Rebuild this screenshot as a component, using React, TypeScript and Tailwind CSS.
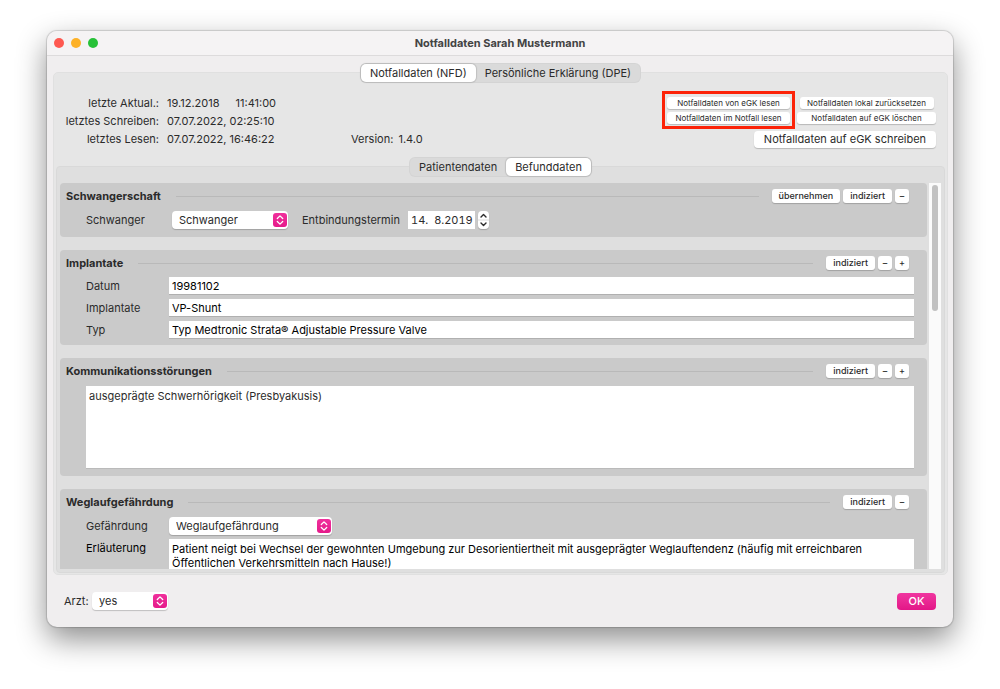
import type { ReactNode } from 'react';
import { clsx } from 'clsx';

const readTimes = [
  { label: 'letzte Aktual.:', value: '19.12.2018', time: '11:41:00' },
  { label: 'letztes Schreiben:', value: '07.07.2022, 02:25:10' },
  { label: 'letztes Lesen:', value: '07.07.2022, 16:46:22' },
];

const implantFields = [
  { id: 'datum', label: 'Datum', value: '19981102' },
  { id: 'implantate', label: 'Implantate', value: 'VP-Shunt' },
  { id: 'typ', label: 'Typ', value: 'Typ Medtronic Strata® Adjustable Pressure Valve' },
];

function Tabs({ items, active }: { items: string[]; active: string }) {
  return (
    <div role="tablist" className="flex h-[18px] rounded-[5px] bg-[#dadada] ring-1 ring-[#d4d4d4]">
      {items.map((item) => (
        <button
          key={item}
          role="tab"
          aria-selected={item === active}
          className={clsx(
            'rounded-[5px] px-[9px] text-[11px] leading-[18px]',
            item === active && 'bg-white shadow-[0_0_1px_1px_rgba(0,0,0,0.12)]'
          )}
        >
          {item}
        </button>
      ))}
    </div>
  );
}

function PushButton({ children, className }: { children: ReactNode; className?: string }) {
  return (
    <button
      className={clsx(
        'flex shrink-0 items-center justify-center whitespace-nowrap bg-white shadow-[0_1px_1px_rgba(0,0,0,0.2)]',
        className
      )}
    >
      {children}
    </button>
  );
}

function Select({ id, value, className }: { id: string; value: string; className: string }) {
  return (
    <div className={clsx('relative h-[18px]', className)}>
      <select
        id={id}
        defaultValue={value}
        className="h-full w-full appearance-none rounded-[4px] bg-white pl-[7px] pr-5 text-[11px] leading-[17px] shadow-[0_1px_1px_rgba(0,0,0,0.2)]"
      >
        <option>{value}</option>
      </select>
      <span className="pointer-events-none absolute right-px top-[2px] flex h-[14px] w-[14px] items-center justify-center rounded-[3px] bg-gradient-to-b from-[#f02f9c] to-[#e51a8a]">
        <svg viewBox="0 0 14 14" className="h-full w-full" fill="none" stroke="white" strokeWidth="1.3" strokeLinecap="round" strokeLinejoin="round">
          <path d="M4.3 5.5 7 2.9l2.7 2.6M4.3 8.5 7 11.1l2.7-2.6" />
        </svg>
      </span>
    </div>
  );
}

interface SectionProps {
  title: string;
  actions: string[];
  className?: string;
  children: ReactNode;
}

function Section({ title, actions, className, children }: SectionProps) {
  return (
    <section className={clsx('shrink-0 rounded-[4px] bg-[#cacaca] pl-[6px] pr-[13px] pt-[6px]', className)}>
      <div className="flex h-[14px] items-center pr-[5px]">
        <h2 className="text-[11px] font-bold leading-[14px]">{title}</h2>
        <div className="ml-[15px] mr-[13px] h-px flex-1 bg-[#b9b9b9]" />
        <div className="flex gap-[3px]">
          {actions.map((action) => (
            <PushButton
              key={action}
              className={clsx('h-[14px] rounded-[3px] text-[9px] font-medium', action.length > 1 ? 'px-[7px]' : 'w-[14px]')}
            >
              {action}
            </PushButton>
          ))}
        </div>
      </div>
      {children}
    </section>
  );
}

function FieldLabel({ htmlFor, children }: { htmlFor: string; children: ReactNode }) {
  return (
    <label htmlFor={htmlFor} className="w-[83px] shrink-0 leading-[18px]">
      {children}
    </label>
  );
}

export default function App() {
  return (
    <main className="flex h-screen flex-col overflow-hidden bg-white px-[47px] pb-[62px] pt-[31px] font-['Inter','Liberation_Sans',sans-serif] text-[11px] text-[#2b2b2b]">
      <div className="flex min-h-0 flex-1 flex-col overflow-hidden rounded-[10px] bg-[#f0eeef] shadow-[0_0_1px_1px_rgba(0,0,0,0.15),0_12px_30px_rgba(0,0,0,0.45)]">
        <header className="flex h-[25px] shrink-0 items-center border-b border-[#dddbdc] bg-[#f5f3f4] px-[7px]">
          <div className="flex flex-1 gap-[7px]">
            <span className="h-[10px] w-[10px] rounded-full bg-[#fe5850]" />
            <span className="h-[10px] w-[10px] rounded-full bg-[#fdb127]" />
            <span className="h-[10px] w-[10px] rounded-full bg-[#27c138]" />
          </div>
          <h1 className="text-[11px] font-bold text-[#434343]">Notfalldaten Sarah Mustermann</h1>
          <div className="flex-1" />
        </header>

        <div className="ml-[6px] mr-[5px] mt-4 flex min-h-0 flex-1 flex-col rounded-[5px] border border-[#e0e0e0] bg-[#e6e6e6] px-[2px] pb-px">
          <div className="-mt-[9px] flex shrink-0 justify-center">
            <Tabs items={['Notfalldaten (NFD)', 'Persönliche Erklärung (DPE)']} active="Notfalldaten (NFD)" />
          </div>

          <div className="mt-[9px] flex shrink-0 items-start pr-[9px]">
            <dl className="mt-[3px] w-[295px]">
              {readTimes.map((row) => (
                <div key={row.label} className="flex h-[18px] items-center">
                  <dt className="w-[103px] text-right">{row.label}</dt>
                  <dd className="ml-[8px] flex gap-4">
                    <span>{row.value}</span>
                    {row.time && <span>{row.time}</span>}
                  </dd>
                </div>
              ))}
            </dl>
            <p className="mt-[39px] leading-[18px]">
              Version: <span className="ml-[2px]">1.4.0</span>
            </p>

            <div className="ml-auto flex flex-col items-end gap-[2px]">
              <div className="flex items-center gap-[2px] text-[8px]">
                <div className="flex flex-col gap-[3px] border-[3px] border-[#fc2308] p-[2px] pt-[3px]">
                  <PushButton className="h-[12px] w-[123px] rounded-[3px]">Notfalldaten von eGK lesen</PushButton>
                  <PushButton className="h-[12px] w-[123px] rounded-[3px]">Notfalldaten im Notfall lesen</PushButton>
                </div>
                <div className="flex flex-col items-center gap-[3px]">
                  <PushButton className="h-[12px] w-[134px] rounded-[3px]">Notfalldaten lokal zurücksetzen</PushButton>
                  <PushButton className="h-[12px] w-[139px] rounded-[3px]">Notfalldaten auf eGK löschen</PushButton>
                </div>
              </div>
              <PushButton className="h-[17px] w-[182px] rounded-[4px]">Notfalldaten auf eGK schreiben</PushButton>
            </div>
          </div>

          <div className="mt-[18px] flex min-h-0 flex-1 flex-col rounded-[4px] border border-[#d9d9d9] bg-[#dfdfdf] pb-[3px] pl-[3px] pr-[3px]">
            <div className="-mt-[9px] mb-[7px] flex shrink-0 justify-center">
              <Tabs items={['Patientendaten', 'Befunddaten']} active="Befunddaten" />
            </div>

            <div className="flex min-h-0 flex-1 gap-[2px]">
              <div className="flex min-w-0 flex-1 flex-col gap-[13px] overflow-hidden">
                <Section title="Schwangerschaft" actions={['übernehmen', 'indiziert', '–']} className="pb-2">
                  <div className="mt-2 flex items-center pl-5">
                    <FieldLabel htmlFor="schwanger">Schwanger</FieldLabel>
                    <Select id="schwanger" value="Schwanger" className="ml-[3px] w-[116px]" />
                    <label htmlFor="termin" className="ml-[14px] w-[106px]">
                      Entbindungstermin
                    </label>
                    <input
                      id="termin"
                      defaultValue="14.  8.2019"
                      className="h-[18px] w-[67px] whitespace-pre bg-white pl-[3px] text-[11px] tabular-nums"
                    />
                    <button aria-label="Termin ändern" className="ml-[3px] h-[18px] w-[11px] rounded-[4px] bg-white shadow-[0_1px_1px_rgba(0,0,0,0.2)]">
                      <svg viewBox="0 0 11 18" className="h-full w-full" fill="none" stroke="#2b2b2b" strokeWidth="1.4" strokeLinecap="round" strokeLinejoin="round">
                        <path d="M3 6 5.5 3.5 8 6M3 12l2.5 2.5L8 12" />
                        <path d="M0 9h11" stroke="#dcdcdc" strokeWidth="1" />
                      </svg>
                    </button>
                  </div>
                </Section>

                <Section title="Implantate" actions={['indiziert', '–', '+']} className="pb-[6px]">
                  <div className="mt-[7px] flex flex-col gap-1 pl-5">
                    {implantFields.map((field) => (
                      <div key={field.id} className="flex">
                        <FieldLabel htmlFor={field.id}>{field.label}</FieldLabel>
                        <input
                          id={field.id}
                          defaultValue={field.value}
                          className="h-[18px] min-w-0 flex-1 border-b border-[#b0b0b0] bg-white pl-[3px] text-[11px] text-black"
                        />
                      </div>
                    ))}
                  </div>
                </Section>

                <Section title="Kommunikationsstörungen" actions={['indiziert', '–', '+']} className="pb-[7px]">
                  <div className="mt-2 flex pl-5">
                    <textarea
                      aria-label="Kommunikationsstörungen"
                      defaultValue="ausgeprägte Schwerhörigkeit (Presbyakusis)"
                      className="h-[83px] flex-1 resize-none border-b border-[#bababa] bg-white px-[3px] pt-[3px] leading-[14px]"
                    />
                  </div>
                </Section>

                <Section title="Weglaufgefährdung" actions={['indiziert', '–']} className="pb-2">
                  <div className="mt-2 flex pl-5">
                    <FieldLabel htmlFor="gefaehrdung">Gefährdung</FieldLabel>
                    <Select id="gefaehrdung" value="Weglaufgefährdung" className="w-[163px]" />
                  </div>
                  <div className="mt-1 flex pl-5 text-black">
                    <FieldLabel htmlFor="erlaeuterung">Erläuterung</FieldLabel>
                    <textarea
                      id="erlaeuterung"
                      defaultValue="Patient neigt bei Wechsel der gewohnten Umgebung zur Desorientiertheit mit ausgeprägter Weglauftendenz (häufig mit erreichbaren Öffentlichen Verkehrsmitteln nach Hause!)"
                      className="h-[60px] flex-1 resize-none bg-white pl-[3px] pr-12 pt-[3px] leading-[14px]"
                    />
                  </div>
                </Section>
              </div>

              <div className="w-[12px] shrink-0 bg-[#fafafa] px-[3px] pt-[2px]">
                <div className="h-[126px] w-full rounded-full bg-[#c1c1c1]" />
              </div>
            </div>
          </div>
        </div>

        <footer className="flex h-[52px] shrink-0 items-center px-[17px]">
          <label htmlFor="arzt" className="w-[28px]">
            Arzt:
          </label>
          <Select id="arzt" value="yes" className="w-[76px]" />
          <button className="ml-auto h-[17px] w-[39px] rounded-[4px] bg-gradient-to-b from-[#f035a0] to-[#e31587] text-[11px] font-medium text-white">
            OK
          </button>
        </footer>
      </div>
    </main>
  );
}
